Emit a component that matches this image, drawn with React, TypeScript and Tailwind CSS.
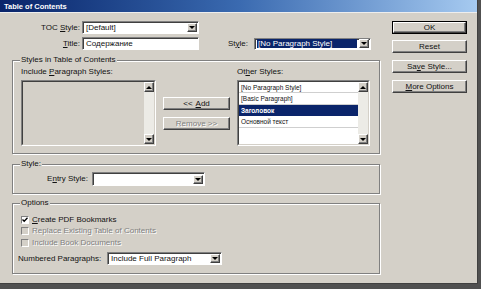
import React from "react";

const raised =
  "bg-[#d4d0c8] border border-t-white border-l-white border-r-[#404040] border-b-[#404040] shadow-[inset_-1px_-1px_0_#808080]";
const sunken =
  "border border-t-[#808080] border-l-[#808080] border-r-white border-b-white shadow-[inset_1px_1px_0_#404040]";

function Down() {
  return <div className="w-0 h-0 border-l-[3px] border-r-[3px] border-t-[3px] border-l-transparent border-r-transparent border-t-black" />;
}
function Up() {
  return <div className="w-0 h-0 border-l-[3px] border-r-[3px] border-b-[3px] border-l-transparent border-r-transparent border-b-black" />;
}

function ArrowBtn() {
  return (
    <div className={`w-[10px] h-[9px] mr-[1px] shrink-0 flex items-center justify-center ${raised}`}>
      <Down />
    </div>
  );
}

function Select({ className, text, hl }: { className: string; text?: string; hl?: boolean }) {
  return (
    <div className={`flex items-center bg-white ${sunken} ${className}`}>
      {hl ? (
        <div className="flex-1 min-w-0 mx-[2px] h-[9px] bg-[#0a246a] text-white leading-[9px] pl-[1px] whitespace-nowrap overflow-hidden">
          {text}
        </div>
      ) : (
        <div className="flex-1 min-w-0 pl-[3px] leading-[10px] whitespace-nowrap overflow-hidden">{text}</div>
      )}
      <ArrowBtn />
    </div>
  );
}

function Button({ children, disabled, def }: { children: React.ReactNode; disabled?: boolean; def?: boolean }) {
  const inner = (
    <div
      className={`h-full flex items-center justify-center leading-[10px] whitespace-nowrap ${raised} ${
        disabled ? "text-[#808080] [text-shadow:1px_1px_0_#fff]" : ""
      }`}
    >
      {children}
    </div>
  );
  if (def) return <div className="h-[13px] border border-black">{inner}</div>;
  return <div className="h-[13px]">{inner}</div>;
}

function Fieldset({ legend, className, children }: { legend: string; className: string; children: React.ReactNode }) {
  return (
    <div className={`relative border border-[#808080] shadow-[inset_1px_1px_0_#fff,1px_1px_0_#fff] ${className}`}>
      <span className="absolute left-[7px] top-[-6px] bg-[#d4d0c8] px-[1px] leading-[10px] whitespace-nowrap">{legend}</span>
      {children}
    </div>
  );
}

function ScrollBar() {
  return (
    <div className="w-[10px] flex flex-col shrink-0">
      <div className={`h-[10px] flex items-center justify-center ${raised}`}>
        <Up />
      </div>
      <div className="flex-1 bg-[#ecebe6]" />
      <div className={`h-[10px] flex items-center justify-center ${raised}`}>
        <Down />
      </div>
    </div>
  );
}

function ListBox({ className, white, children }: { className: string; white?: boolean; children?: React.ReactNode }) {
  return (
    <div
      className={`flex border border-t-[#808080] border-l-[#808080] border-r-white border-b-white ${className}`}
    >
      <div className="flex-1 flex border border-t-[#404040] border-l-[#404040] border-r-[#d4d0c8] border-b-[#d4d0c8]">
        <div className={`flex-1 flex flex-col ${white ? "bg-white" : "bg-[#d4d0c8]"}`}>{children}</div>
        <ScrollBar />
      </div>
    </div>
  );
}

function Check({ checked, disabled, children }: { checked?: boolean; disabled?: boolean; children: React.ReactNode }) {
  return (
    <div className="flex items-center h-full">
      <div
        className={`w-[8px] h-[8px] flex items-center justify-center border border-t-[#808080] border-l-[#808080] border-r-white border-b-white ${
          disabled ? "bg-[#d4d0c8]" : "bg-white"
        }`}
      >
        {checked && (
          <svg width="6" height="6" viewBox="0 0 6 6">
            <path d="M0.5 2.5 L2.2 4.3 L5.5 0.8" stroke="#000" strokeWidth="1.3" fill="none" />
          </svg>
        )}
      </div>
      <span
        className={`ml-[3px] leading-[10px] whitespace-nowrap ${disabled ? "text-[#808080] [text-shadow:1px_1px_0_#fff]" : ""}`}
      >
        {children}
      </span>
    </div>
  );
}

export default function App() {
  return (
    <div className="w-[481px] h-[289px] bg-[#505050] font-['Liberation_Sans',Arial,sans-serif] text-[8px] text-[#111]">
      <div className="w-[478px] h-[284px] bg-[#d4d0c8] border-r border-b border-[#404040] flex flex-col">
        <div className="h-[13px] shrink-0 bg-gradient-to-r from-[#0a246a] via-[#3a6ab0] to-[#a6caf0] text-white font-bold text-[7.5px] leading-[13px] pl-[4px] border-b border-[#eeeeee]">
          Table of Contents
        </div>
        <div className="flex flex-1">
          {/* left column */}
          <div className="w-[380px] pl-[12px] pt-[8px] flex flex-col shrink-0">
            <div className="flex items-center h-[13px]">
              <div className="w-[68px] text-right leading-[10px] whitespace-nowrap">
                TOC <u>S</u>tyle:
              </div>
              <Select className="ml-[2px] w-[117px] h-[13px]" text="[Default]" />
            </div>
            <div className="flex items-center h-[13px] mt-[3px]">
              <div className="w-[68px] text-right leading-[10px]">
                <u>T</u>itle:
              </div>
              <div className={`ml-[2px] w-[117px] h-[13px] bg-white pl-[3px] leading-[11px] ${sunken}`}>Содержание</div>
              <div className="ml-[29px] leading-[10px]">
                St<u>y</u>le:
              </div>
              <Select className="ml-[6px] w-[117px] h-[12px]" text="[No Paragraph Style]" hl />
            </div>

            <Fieldset legend="Styles in Table of Contents" className="mt-[10px] w-[368px] h-[94px]">
              <div className="flex pt-[6px] pl-[8px]">
                <div className="w-[135px] flex flex-col">
                  <div className="h-[10px] leading-[10px] whitespace-nowrap">
                    Include <u>P</u>aragraph Styles:
                  </div>
                  <ListBox className="mt-[3px] h-[66px]" />
                </div>
                <div className="ml-[7px] w-[67px] pt-[30px] flex flex-col">
                  <Button>
                    &lt;&lt; <u className="ml-[3px]">A</u>dd
                  </Button>
                  <div className="mt-[7px]">
                    <Button disabled>Remove &gt;&gt;</Button>
                  </div>
                </div>
                <div className="ml-[7px] w-[133px] flex flex-col">
                  <div className="h-[10px] leading-[10px]">
                    Ot<u>h</u>er Styles:
                  </div>
                  <ListBox className="mt-[3px] h-[66px]" white>
                    <div className="h-[11px] leading-[11px] text-[6.5px] pl-[2px] border-b border-[#cfcfcf] whitespace-nowrap">
                      [No Paragraph Style]
                    </div>
                    <div className="h-[12px] leading-[12px] text-[6.5px] pl-[2px] border-b border-[#cfcfcf] whitespace-nowrap">
                      [Basic Paragraph]
                    </div>
                    <div className="h-[11px] leading-[11px] text-[6.5px] pl-[2px] bg-[#0a246a] text-white font-bold whitespace-nowrap">
                      Заголовок
                    </div>
                    <div className="h-[12px] leading-[12px] text-[6.5px] pl-[2px] border-b border-[#cfcfcf] whitespace-nowrap">
                      Основной текст
                    </div>
                  </ListBox>
                </div>
              </div>
            </Fieldset>

            <Fieldset legend="Style:" className="mt-[10px] w-[368px] h-[30px]">
              <div className="flex items-center pt-[7px]">
                <div className="w-[75px] text-right leading-[10px]">
                  E<u>n</u>try Style:
                </div>
                <Select className="ml-[4px] w-[113px] h-[14px]" text="" />
              </div>
            </Fieldset>

            <Fieldset legend="Options" className="mt-[9px] w-[368px] h-[71px]">
              <div className="flex flex-col pt-[10px]">
                <div className="h-[11px] pl-[8px]">
                  <Check checked>
                    <u>C</u>reate PDF Bookmarks
                  </Check>
                </div>
                <div className="h-[12px] pl-[8px]">
                  <Check disabled>Replace Existing Table of Contents</Check>
                </div>
                <div className="h-[12px] pl-[8px]">
                  <Check disabled>Include Book Documents</Check>
                </div>
                <div className="mt-[3px] flex items-center h-[13px] pl-[5px]">
                  <div className="w-[89px] shrink-0 leading-[10px] whitespace-nowrap">Numbered Paragraphs:</div>
                  <Select className="w-[115px] h-[13px]" text="Include Full Paragraph" />
                </div>
              </div>
            </Fieldset>
          </div>

          {/* right buttons */}
          <div className="ml-[12px] w-[75px] pt-[8px] flex flex-col">
            <Button def>OK</Button>
            <div className="mt-[6px]">
              <Button>Reset</Button>
            </div>
            <div className="mt-[7px]">
              <Button>
                Sa<u>v</u>e Style...
              </Button>
            </div>
            <div className="mt-[7px]">
              <Button>
                <u>M</u>ore Options
              </Button>
            </div>
          </div>
        </div>
      </div>
    </div>
  );
}
